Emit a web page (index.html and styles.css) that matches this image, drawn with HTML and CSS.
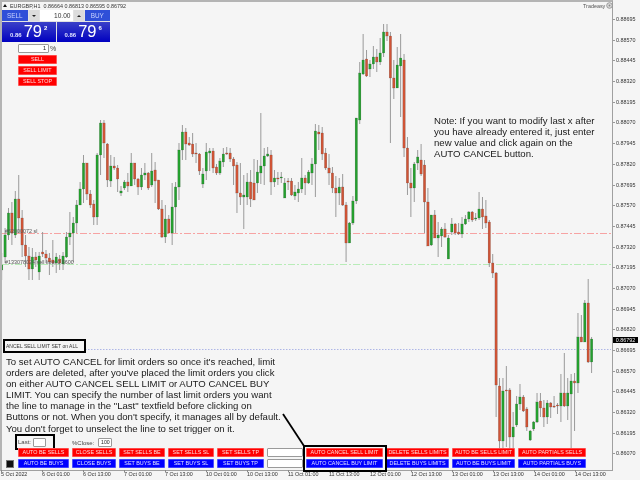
FILE: index.html
```html
<!DOCTYPE html>
<html lang="en">
<head>
<meta charset="utf-8">
<title>EURGBP,H1</title>
<link rel="stylesheet" href="styles.css">
</head>
<body>
<div class="stage">
  <div class="chart">
    <svg id="plot" class="plot" width="609" height="468" viewBox="2 2 609 468"></svg>
  </div>
  <div class="prices">
    <span>0.88695</span><span>0.88570</span><span>0.88445</span><span>0.88320</span><span>0.88195</span>
    <span>0.88070</span><span>0.87945</span><span>0.87820</span><span>0.87695</span><span>0.87570</span>
    <span>0.87445</span><span>0.87320</span><span>0.87195</span><span>0.87070</span><span>0.86945</span>
    <span>0.86820</span><span>0.86695</span><span>0.86570</span><span>0.86445</span><span>0.86320</span>
    <span>0.86195</span><span>0.86070</span>
  </div>
  <div class="times">
    <span>5 Oct 2022</span><span>6 Oct 01:00</span><span>6 Oct 13:00</span><span>7 Oct 01:00</span><span>7 Oct 13:00</span>
    <span>10 Oct 01:00</span><span>10 Oct 13:00</span><span>11 Oct 01:00</span><span>11 Oct 13:00</span><span>12 Oct 01:00</span>
    <span>12 Oct 13:00</span><span>13 Oct 01:00</span><span>13 Oct 13:00</span><span>14 Oct 01:00</span><span>14 Oct 13:00</span>
  </div>

  <div class="title"><span class="title-arrow"></span>EURGBP,H1&nbsp; 0.86664 0.86813 0.86595 0.86792</div>
  <div class="brand">Tradeasy
    <svg class="brand-icon" width="7" height="7" viewBox="0 0 7 7"><circle cx="3.5" cy="3.5" r="2.8" fill="#ddd" stroke="#888" stroke-width=".8"/><circle cx="3.5" cy="3.5" r="1" fill="#888"/></svg>
  </div>

  <div class="ticket">
    <div class="ticket-top">
      <div class="ticket-side">SELL</div>
      <div class="ticket-step"><span class="tri-down"></span></div>
      <div class="ticket-lot">10.00</div>
      <div class="ticket-step"><span class="tri-up"></span></div>
      <div class="ticket-side">BUY</div>
    </div>
    <div class="ticket-quotes">
      <div class="quote"><span class="q-small">0.86</span><span class="q-big">79</span><span class="q-sup">2</span></div>
      <div class="quote"><span class="q-small">0.86</span><span class="q-big">79</span><span class="q-sup">6</span></div>
    </div>
  </div>

  <div class="orders">
    <div class="pct"><span class="field pct-field">1</span><span class="pct-sign">%</span></div>
    <div class="btn red">SELL</div>
    <div class="btn red">SELL LIMIT</div>
    <div class="btn red">SELL STOP</div>
  </div>

  <div class="line-label red-label">#63000072 sl</div>
  <div class="line-label green-label">#133078024 sell limit 0.8600</div>

  <div class="note">Note: If you want to modify last x after<br>you have already entered it, just enter<br>new value and click again on the<br>AUTO CANCEL button.</div>

  <div class="status">ANCEL SELL LIMIT SET on ALL</div>
  <div class="price-tag">0.86792</div>

  <div class="explain">To set AUTO CANCEL for limit orders so once it's reached, limit<br>orders are deleted, after you've placed the limit orders you click<br>on either AUTO CANCEL SELL LIMIT or AUTO CANCEL BUY<br>LIMIT. You can specify the number of last limit orders you want<br>the line to manage in the "Last" textfield before clicking on<br>Buttons or not. When you don't specify, it manages all by default.<br>You don't forget to unselect the line to set trigger on it.</div>

  <div class="last-box"><span>Last:</span><span class="field last-field"></span></div>
  <div class="close-box"><span>%Close:</span><span class="field close-field">100</span></div>
  <div class="toggle"><span></span></div>

  <div class="bar">
    <div class="btn red">AUTO BE SELLS</div>
    <div class="btn red">CLOSE SELLS</div>
    <div class="btn red">SET SELLS BE</div>
    <div class="btn red">SET SELLS SL</div>
    <div class="btn red">SET SELLS TP</div>
    <div class="field bar-field"></div>
    <div class="btn red">AUTO CANCEL SELL LIMIT</div>
    <div class="btn red">DELETE SELLS LIMITS</div>
    <div class="btn red">AUTO BE SELLS LIMIT</div>
    <div class="btn red">AUTO PARTIALS SELLS</div>
    <div class="btn blue">AUTO BE BUYS</div>
    <div class="btn blue">CLOSE BUYS</div>
    <div class="btn blue">SET BUYS BE</div>
    <div class="btn blue">SET BUYS SL</div>
    <div class="btn blue">SET BUYS TP</div>
    <div class="field bar-field"></div>
    <div class="btn blue">AUTO CANCEL BUY LIMIT</div>
    <div class="btn blue">DELETE BUYS LIMITS</div>
    <div class="btn blue">AUTO BE BUYS LIMIT</div>
    <div class="btn blue">AUTO PARTIALS BUYS</div>
  </div>

  <div class="frame-cancel"></div>
  <svg class="pointer" width="30" height="40" viewBox="0 0 30 40"><line x1="2" y1="1" x2="23" y2="33" stroke="#000" stroke-width="1.8"/></svg>
</div>
<script src="chart.js"></script>
</body>
</html>
```
FILE: styles.css
```css
* { box-sizing: border-box; }
html, body { margin: 0; padding: 0; background: #f5f5f5; }
body { font-family: "Liberation Sans", Arial, sans-serif; color: #222; }

.stage {
  position: relative;
  width: 640px;
  height: 480px;
  overflow: hidden;
  display: grid;
  grid-template-columns: 613px 27px;
  grid-template-rows: 471px 9px;
  background: #f5f5f5;
  filter: blur(0.3px);
}

.chart {
  border-top: 2px solid #b4b4b4;
  border-left: 2px solid #b4b4b4;
  border-right: 1px solid #a0a0a0;
  border-bottom: 1px solid #a0a0a0;
  overflow: hidden;
}
.plot { display: block; }

.prices {
  display: flex;
  flex-direction: column;
  gap: 0;
  padding-top: 16px;
  font-size: 5.4px;
  color: #333;
}
.prices span {
  height: 21px;
  line-height: 6px;
  padding-left: 3px;
  position: relative;
}
.prices span::before {
  content: "";
  position: absolute;
  left: 0;
  top: 3px;
  width: 2px;
  height: 1px;
  background: #999;
}

.times {
  display: grid;
  grid-column: 1 / 3;
  grid-template-columns: repeat(15, 41px);
  padding-left: 1px;
  font-size: 5.4px;
  line-height: 7px;
  color: #333;
  white-space: nowrap;
}
.times span { position: relative; padding-top: 0; }
.times span::before {
  content: "";
  position: absolute;
  left: 0;
  top: -1px;
  width: 1px;
  height: 2px;
  background: #888;
}

.title {
  position: absolute;
  left: 2px;
  top: 2px;
  display: flex;
  align-items: center;
  gap: 2px;
  height: 7px;
  font-size: 5.4px;
  color: #333;
  white-space: nowrap;
}
.title-arrow {
  width: 0;
  height: 0;
  margin: 0 1px;
  border-left: 2px solid transparent;
  border-right: 2px solid transparent;
  border-bottom: 3px solid #111;
}

.brand {
  position: absolute;
  left: 583px;
  top: 2px;
  display: flex;
  align-items: center;
  gap: 1px;
  height: 7px;
  font-size: 5.4px;
  color: #555;
}

.ticket {
  position: absolute;
  left: 2px;
  top: 10px;
  width: 108px;
  height: 32px;
  display: flex;
  flex-direction: column;
  background: #e2e2e2;
}
.ticket-top {
  display: flex;
  height: 11px;
  gap: 1px;
  align-items: stretch;
}
.ticket-side {
  width: 24px;
  flex: 1 1 auto;
  background: #2f4fd8;
  color: #c9d2ff;
  font-size: 6.4px;
  line-height: 11px;
  text-align: center;
}
.ticket-step {
  width: 10px;
  background: #dcdcdc;
  display: flex;
  align-items: center;
  justify-content: center;
}
.tri-down, .tri-up {
  width: 0;
  height: 0;
  border-left: 2px solid transparent;
  border-right: 2px solid transparent;
}
.tri-down { border-top: 2px solid #222; }
.tri-up { border-bottom: 2px solid #222; }
.ticket-lot {
  width: 33px;
  background: #fff;
  font-size: 6.6px;
  line-height: 11px;
  text-align: right;
  padding-right: 2px;
  color: #333;
}
.ticket-quotes {
  display: grid;
  grid-template-columns: 1fr 1fr;
  gap: 1px;
  height: 20px;
  margin-top: 1px;
}
.quote {
  display: flex;
  background: linear-gradient(#3a40c8, #0000c0);
  color: #fff;
  padding-left: 8px;
  position: relative;
}
.q-small { font-size: 6px; font-weight: 700; margin-top: 10px; color: #dfe2ff; }
.q-big { font-size: 16.5px; line-height: 19px; margin-left: 2px; }
.q-sup { font-size: 6px; font-weight: 700; margin-left: 2px; margin-top: 3px; }

.orders {
  position: absolute;
  left: 18px;
  top: 44px;
  width: 39px;
  display: flex;
  flex-direction: column;
  gap: 2px;
}
.pct { display: flex; height: 9px; gap: 1px; align-items: center; }
.pct-sign { font-size: 7px; color: #444; }

.field {
  display: block;
  background: #fff;
  border: 1px solid #9a9a9a;
  border-radius: 1px;
  font-size: 5.6px;
  line-height: 7px;
  color: #222;
}
.pct-field { flex: 0 0 31px; height: 9px; text-align: right; padding-right: 2px; }

.btn {
  height: 9px;
  font-size: 5.4px;
  line-height: 9px;
  text-align: center;
  white-space: nowrap;
  overflow: hidden;
}
.red { background: #ff0000; color: #ffdcdc; box-shadow: inset 0 0 0 .6px #ff8f8f; }
.blue { background: #0000ff; color: #dfe2ff; box-shadow: inset 0 0 0 .6px #7f86ff; }

.line-label {
  position: absolute;
  left: 5px;
  font-size: 5.4px;
  line-height: 6px;
  color: #555;
  white-space: nowrap;
}
.red-label { top: 228px; }
.green-label { top: 259px; }

.note, .explain {
  position: absolute;
  font-size: 9.6px;
  line-height: 11.1px;
  color: #1a1a1a;
  white-space: nowrap;
}
.note { left: 434px; top: 115px; }
.explain { left: 6px; top: 356px; }

.status {
  position: absolute;
  left: 3px;
  top: 339px;
  width: 83px;
  height: 14px;
  border: 2px solid #000;
  padding-left: 1px;
  font-size: 5px;
  line-height: 10px;
  color: #333;
  white-space: nowrap;
  overflow: hidden;
}

.price-tag {
  position: absolute;
  left: 613px;
  top: 337px;
  width: 25px;
  height: 6px;
  background: #000;
  color: #eee;
  font-size: 5.4px;
  line-height: 6px;
  text-align: center;
}

.last-box {
  position: absolute;
  left: 15px;
  top: 434px;
  width: 40px;
  height: 16px;
  border: 2px solid #000;
  display: flex;
  align-items: center;
  gap: 2px;
  padding-left: 1px;
  font-size: 6px;
  color: #444;
}
.last-field { width: 13px; height: 9px; }

.close-box {
  position: absolute;
  left: 72px;
  top: 438px;
  display: flex;
  align-items: center;
  gap: 4px;
  font-size: 6px;
  color: #444;
}
.close-field { width: 14px; height: 9px; text-align: center; font-size: 5.2px; }

.toggle {
  position: absolute;
  left: 6px;
  top: 460px;
  width: 8px;
  height: 8px;
  background: #fff;
  border: 1px solid #777;
}
.toggle span { display: block; width: 6px; height: 6px; background: #111; }

.bar {
  position: absolute;
  left: 18px;
  top: 448px;
  display: grid;
  grid-template-columns: 51px 44px 46px 46px 47px 36px 77px 63px 63px 68px;
  grid-auto-rows: 9px;
  gap: 2px 3px;
}
.bar-field { height: 9px; }

.frame-cancel {
  position: absolute;
  left: 303px;
  top: 445px;
  width: 84px;
  height: 27px;
  border: 2px solid #000;
}
.pointer { position: absolute; left: 281px; top: 413px; }
```
FILE: chart.js
```js
var C = [
['g',253,265,270,280],['g',228,235,257,263],['g',208,213,235,240],['r',202,213,233,245],['g',191,199,235,238],
['r',175,199,218,233],['r',210,218,245,257],['r',235,245,256,267],['r',247,256,269,280],['g',248,257,269,280],
['r',252,257,260,267],['g',252,256,272,280],['r',232,252,254,257],['r',250,254,258,263],['r',253,258,262,275],
['r',240,260,263,267],['g',253,257,263,273],['r',255,259,263,270],['g',252,256,264,270],['g',232,237,257,258],
['g',212,233,237,245],['g',217,223,233,262],['g',200,205,223,233],['g',182,189,205,205],['g',155,163,189,203],
['r',163,163,194,200],['r',190,194,205,208],['r',200,204,217,225],['g',153,155,217,225],['g',120,123,155,175],
['r',120,123,143,158],['r',143,144,180,187],['g',155,166,181,187],['r',157,166,168,170],['r',165,168,179,192],
['g',186,191,193,196],['g',180,182,188,190],['r',173,182,186,192],['g',153,163,186,186],['r',163,163,179,185],
['r',178,179,187,195],['g',168,175,187,190],['g',163,173,175,180],['r',172,173,188,190],['g',153,171,185,187],
['r',162,170,181,203],['r',180,180,209,210],['r',200,209,237,238],['g',205,219,237,243],['r',215,219,233,233],
['g',183,207,233,245],['g',182,187,207,233],['g',143,150,187,200],['g',125,132,150,160],['r',128,132,144,160],
['r',137,143,145,146],['r',133,144,154,157],['r',143,153,154,163],['r',153,154,171,175],['g',168,174,184,188],
['g',143,152,171,180],['g',148,151,153,171],['r',148,151,168,173],['r',164,167,173,175],['g',158,161,173,175],
['g',148,154,162,167],['r',147,153,154,155],['r',148,153,159,162],['r',157,159,166,185],['r',162,165,193,213],
['r',163,193,197,205],['g',175,195,197,229],['g',173,182,197,205],['r',170,182,199,207],['r',159,183,200,200],
['g',160,172,183,193],['g',113,166,173,184],['g',148,156,166,185],['g',147,154,156,157],['r',150,155,182,195],
['g',170,178,182,187],['r',172,178,179,185],['g',172,177,178,183],['g',178,183,198,198],['r',178,181,182,190],
['r',178,181,195,196],['g',185,192,196,200],['g',182,189,193,202],['g',158,178,189,193],['r',175,178,183,195],
['g',170,172,183,184],['g',158,164,173,185],['g',124,131,164,197],['r',125,132,134,150],['r',127,133,154,160],
['r',148,153,168,170],['r',154,168,173,185],['r',167,173,188,193],['r',176,188,193,217],['g',178,187,193,205],
['r',174,187,205,206],['r',202,205,243,262],['g',222,223,243,243],['g',196,201,223,225],['g',118,118,201,204],
['g',62,73,120,124],['g',34,60,74,75],['r',50,59,76,77],['g',60,64,69,77],['g',46,57,64,69],
['r',49,57,62,72],['g',38,53,62,65],['g',24,32,53,57],['r',24,32,36,41],['r',32,36,78,143],
['r',60,78,88,99],['g',47,65,88,88],['g',34,58,66,117],['r',54,60,148,157],['r',137,148,183,195],
['r',168,183,188,217],['g',162,164,188,202],['g',150,157,163,170],['r',144,160,174,176],['r',160,165,202,233],
['r',188,202,246,246],['g',215,215,245,246],['r',210,215,238,238],['g',222,235,238,257],['g',227,229,236,247],
['r',223,229,237,238],['g',235,238,259,259],['g',218,224,232,235],['r',223,224,233,235],['r',223,232,234,235],
['g',217,224,234,238],['g',215,219,224,225],['g',211,212,219,222],['r',211,212,220,222],['g',213,218,219,221],
['g',192,209,218,220],['r',197,209,217,229],['r',200,216,223,228],['r',220,222,263,267],['r',254,263,273,278],
['r',272,273,385,417],['r',378,386,441,450],['g',378,391,441,450],['r',366,390,391,447],['r',388,390,437,450],
['g',412,427,437,450],['g',396,404,425,427],['g',384,397,404,410],['r',395,397,411,412],['r',407,409,427,431],
['g',430,431,440,441],['g',421,422,429,431],['g',393,402,422,423],['r',393,401,408,417],['r',400,408,417,427],
['g',400,403,417,424],['r',402,403,407,418],['r',396,406,407,408],['r',403,405,406,414],['g',374,393,406,422],
['r',353,393,406,407],['g',378,393,406,420],['g',374,381,394,450],['r',373,381,383,431],['g',313,337,383,393],
['r',315,337,342,342],['g',300,303,342,342],['r',279,303,362,363],['g',337,339,362,373]
];
var NS = 'http://www.w3.org/2000/svg';
var svg = document.getElementById('plot');
function add(tag, attrs) {
  var el = document.createElementNS(NS, tag);
  for (var k in attrs) el.setAttribute(k, attrs[k]);
  svg.appendChild(el);
}
add('line', {x1: 2, x2: 612, y1: 233.5, y2: 233.5, stroke: '#f7a3a3', 'stroke-width': 1, 'stroke-dasharray': '7 2 2 2'});
add('line', {x1: 2, x2: 612, y1: 264.5, y2: 264.5, stroke: '#b8ecb8', 'stroke-width': 1, 'stroke-dasharray': '7 2 2 2'});
add('line', {x1: 85, x2: 612, y1: 349.5, y2: 349.5, stroke: '#aeb6e6', 'stroke-width': 1, 'stroke-dasharray': '1.5 1.5'});
C.forEach(function (c, i) {
  var x = 1.67 + 3.41 * i;
  add('line', {x1: x, x2: x, y1: c[1], y2: c[4], stroke: '#9a9a9a', 'stroke-width': 1});
  add('rect', {
    x: x - 1.2, width: 2.4, y: c[2], height: Math.max(c[3] - c[2], 1),
    fill: c[0] === 'g' ? '#24a02e' : '#cf5436',
    stroke: 'rgba(50,50,50,.5)', 'stroke-width': .3
  });
});
```
